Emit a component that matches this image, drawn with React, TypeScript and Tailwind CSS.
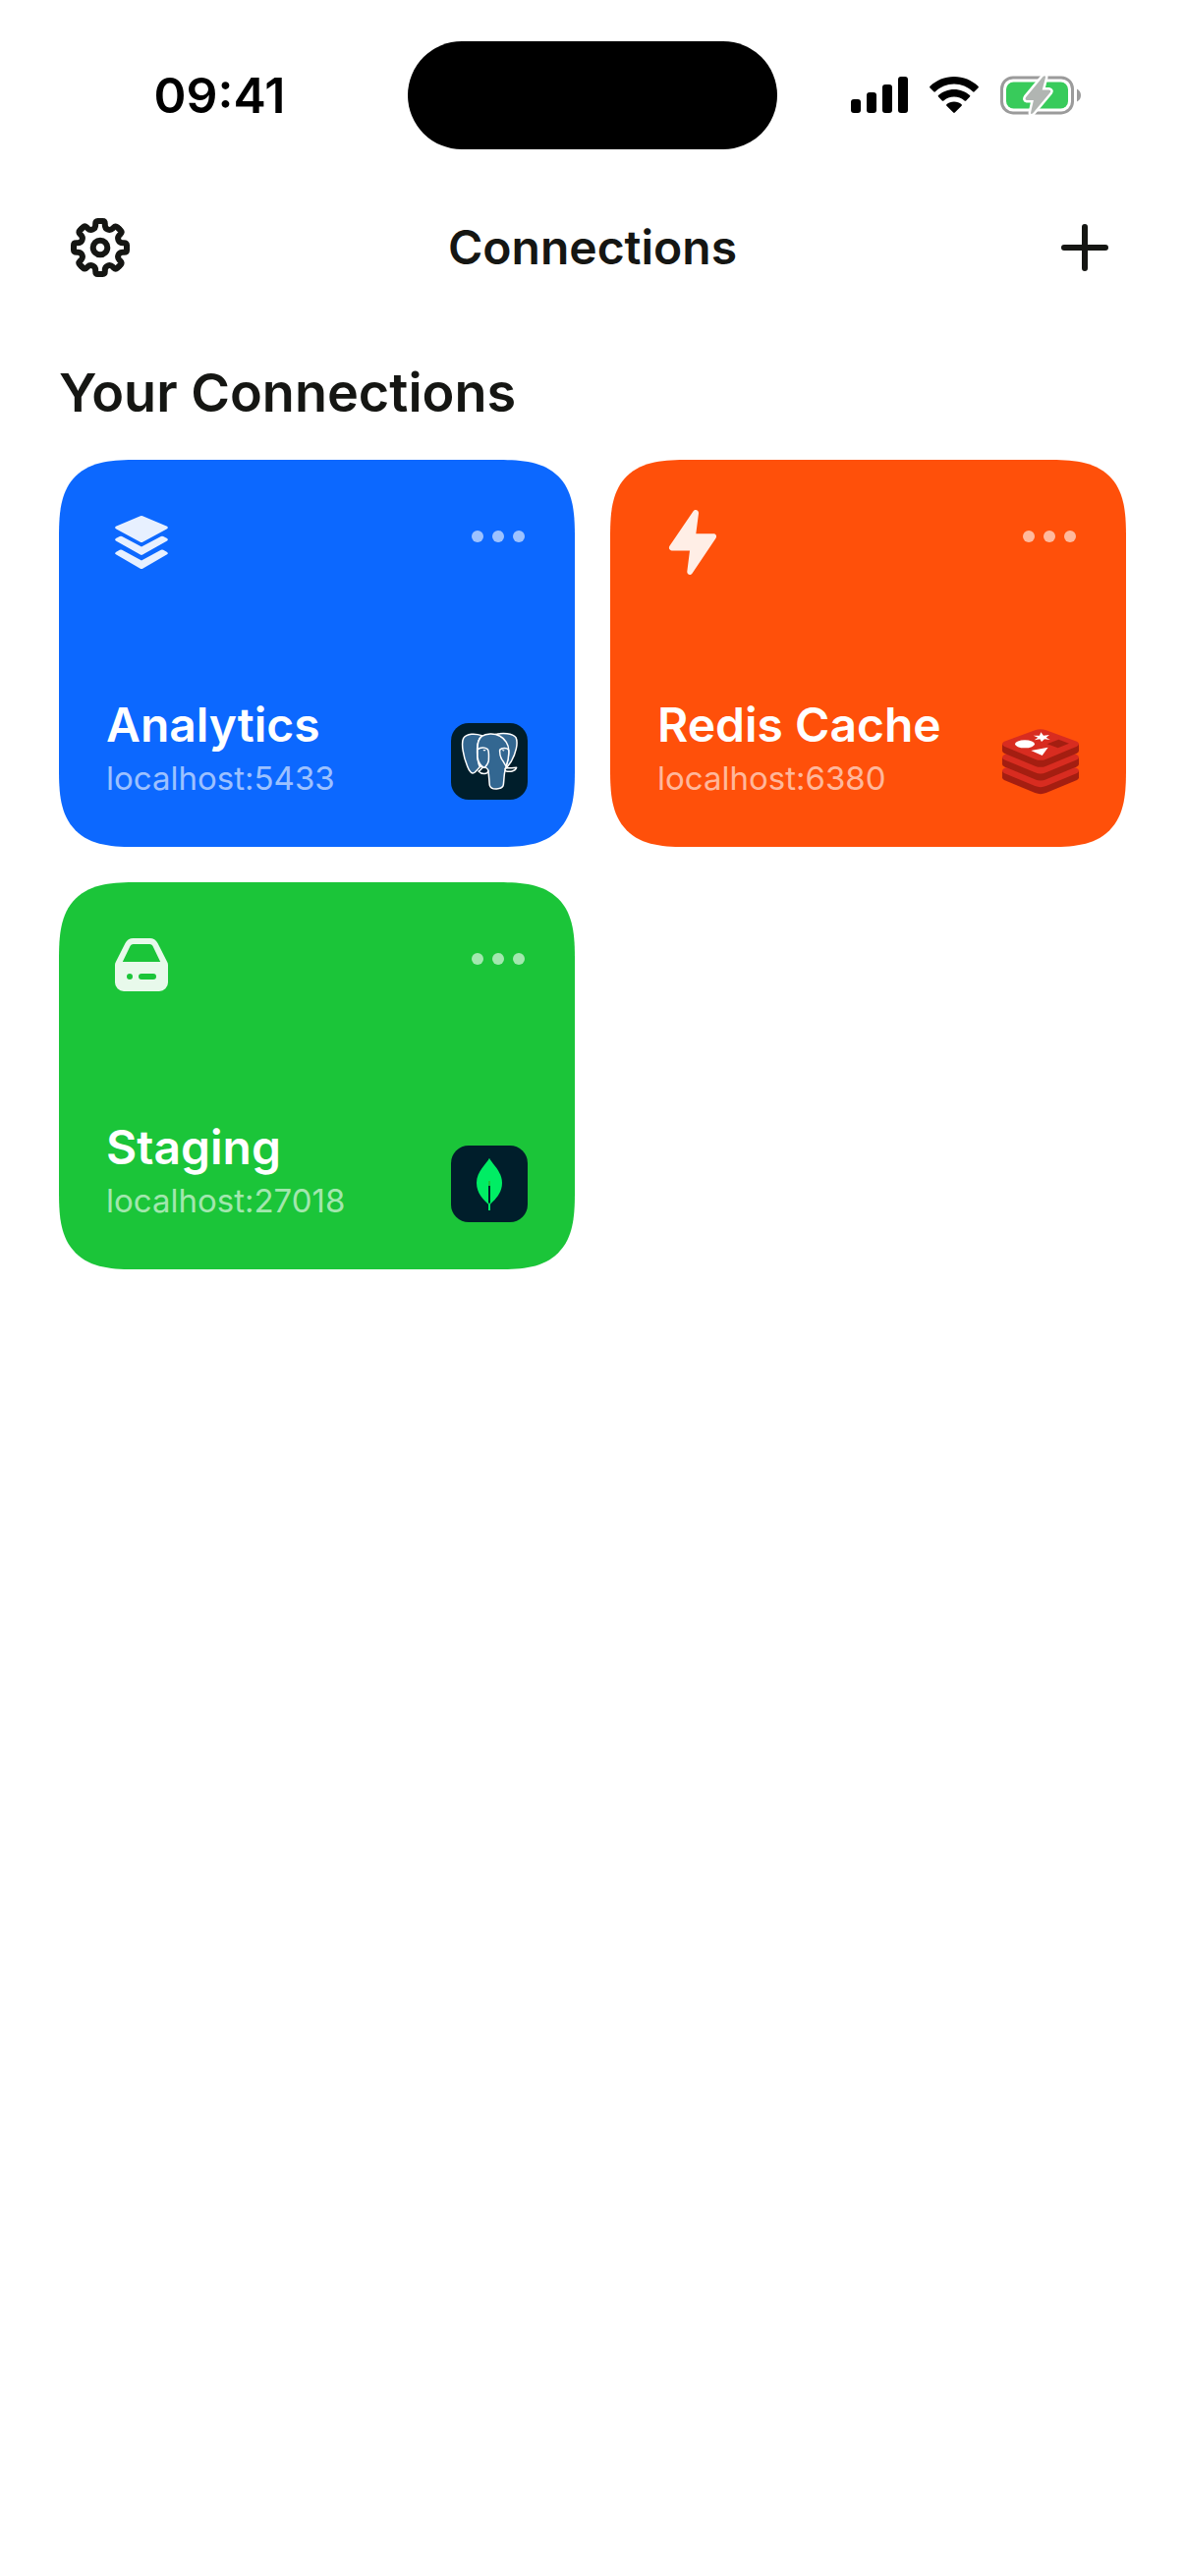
import type { ReactNode } from 'react'

interface Connection {
  name: string
  host: string
  color: string
  icon: ReactNode
  logo: ReactNode
}

function SignalIcon() {
  return (
    <svg className="h-[38px] w-[58px]" viewBox="0 0 58 38" fill="currentColor" aria-hidden="true">
      <rect x="0" y="23" width="10" height="14" rx="3" />
      <rect x="16" y="16" width="10" height="21" rx="3" />
      <rect x="32" y="8" width="10" height="29" rx="3" />
      <rect x="48" y="0" width="10" height="37" rx="3" />
    </svg>
  )
}

function WifiIcon() {
  return (
    <svg className="h-[38px] w-[50px]" viewBox="0 0 50 38" fill="currentColor" aria-hidden="true">
      <path d="M25 0C34.500 0 43 3.600 49.500 9.800Q50.300 10.600 49.500 11.400L45.700 15.300Q44.900 16.100 44.100 15.300C39 10.400 32.300 7.500 25 7.500S11 10.400 5.900 15.300Q5.100 16.100 4.300 15.300L.5 11.400Q-.3 10.600 .5 9.800C7 3.600 15.500 0 25 0Z" />
      <path d="M25 12.900C31.200 12.900 36.800 15.200 41 19Q41.800 19.800 41 20.600L37.200 24.400Q36.400 25.200 35.600 24.400C32.800 21.900 29.100 20.400 25 20.400S17.200 21.900 14.400 24.400Q13.600 25.200 12.800 24.400L9 20.600Q8.200 19.800 9 19C13.200 15.200 18.800 12.900 25 12.900Z" />
      <path d="M25 25.400C27.900 25.400 30.600 26.400 32.600 28.200Q33.400 29 32.600 29.800L25.800 36.600Q25 37.400 24.200 36.600L17.400 29.800Q16.600 29 17.400 28.200C19.400 26.400 22.100 25.400 25 25.400Z" />
    </svg>
  )
}

function BatteryIcon() {
  return (
    <svg className="h-[40px] w-[82px]" viewBox="0 0 82 40" aria-hidden="true">
      <rect x="1.500" y="1.900" width="72" height="36" rx="11.500" fill="none" stroke="#9b9b9b" strokeWidth="3" />
      <path d="M78 13.500Q82 15.500 82 20T78 26.500Z" fill="#9b9b9b" />
      <rect x="6" y="6.500" width="63" height="27" rx="7.500" fill="#38cb5b" />
      <path
        d="M43.700 .8Q46.500-.8 45.900 2.200L42.700 14.500H49.500Q52.500 15 50.500 17.500L33.200 38.200Q30.500 40 31.200 37L33.900 25H27Q24.500 24.500 26.300 21.700Z"
        fill="#b1b5b2"
        stroke="#fff"
        strokeWidth="5"
        strokeLinejoin="round"
        paintOrder="stroke"
      />
    </svg>
  )
}

function GearIcon() {
  return (
    <svg className="size-[66px]" viewBox="-33 -33 66 66" fill="none" stroke="currentColor" strokeWidth="6" strokeLinecap="round" aria-hidden="true">
      <circle r="7.300" />
      {[0, 45, 90, 135, 180, 225, 270, 315].map((angle) => (
        <path
          key={angle}
          transform={`rotate(${angle})`}
          d="M0-27H2.500Q4.800-27 4.800-24.200V-23C4.800-18.500 9.700-16.500 12.870-19.650L13.700-20.500Q15.700-22.500 17.300-20.900L19.100-19.100"
        />
      ))}
    </svg>
  )
}

function PlusIcon() {
  return (
    <svg className="size-[66px]" viewBox="-33 -33 66 66" fill="none" stroke="currentColor" strokeWidth="6" strokeLinecap="round" aria-hidden="true">
      <path d="M0-21V21M-21 0H21" />
    </svg>
  )
}

function LayersIcon() {
  return (
    <svg className="size-[72px]" viewBox="0 0 24 24" fill="currentColor" aria-hidden="true">
      <path d="M11.600 3.100Q12 2.900 12.400 3.100L20.700 6.600Q21.300 7 20.700 7.400L12.400 11.900Q12 12.100 11.600 11.900L3.300 7.400Q2.700 7 3.300 6.600Z" />
      <path d="M4.600 10Q5 9.800 5.400 10L12 13.500 18.600 10Q19 9.800 19.400 10L20.700 10.700Q21.300 11.100 20.700 11.500L12.400 16.200Q12 16.400 11.600 16.200L3.300 11.500Q2.700 11.100 3.300 10.700Z" />
      <path d="M4.600 14.600Q5 14.400 5.400 14.600L12 18.200 18.600 14.600Q19 14.400 19.400 14.600L20.700 15.300Q21.300 15.700 20.700 16.100L12.400 20.900Q12 21.100 11.600 20.900L3.300 16.100Q2.700 15.700 3.300 15.300Z" />
    </svg>
  )
}

function BoltIcon() {
  return (
    <svg className="size-[72px]" viewBox="0 0 24 24" fill="currentColor" aria-hidden="true">
      <path d="M12.200 1.450C12.800.6 14.100 1.100 14 2.150L13.100 9.100H19.100C19.900 9.100 20.300 10 19.800 10.700L11.800 22.550C11.200 23.400 10 22.900 10.100 21.900L11 14.800H4.900C4.100 14.800 3.700 13.900 4.200 13.200Z" />
    </svg>
  )
}

function DriveIcon() {
  return (
    <svg className="size-[72px]" viewBox="0 0 24 24" fill="currentColor" aria-hidden="true">
      <path
        fillRule="evenodd"
        d="M9.200 3H14.800C16 3 17 3.600 17.500 4.700L20.700 11Q21 11.500 21 12.100V18A3 3 0 0 1 18 21H6A3 3 0 0 1 3 18V12.100Q3 11.500 3.300 11L6.500 4.700C7 3.600 8 3 9.200 3ZM9.200 5Q8.500 5 8.200 5.600L5.600 11H18.400L15.800 5.600Q15.500 5 14.800 5ZM8 15A1 1 0 0 0 8 17A1 1 0 0 0 8 15ZM12 15A1 1 0 0 0 12 17H16A1 1 0 0 0 16 15Z"
      />
    </svg>
  )
}

function PostgresLogo() {
  return (
    <svg className="size-[78px] shrink-0" viewBox="0 0 234 234" role="img" aria-label="PostgreSQL">
      <rect width="234" height="234" rx="54" fill="#001e2b" />
      <g fill="#336791" stroke="#fff" strokeWidth="4.500" strokeLinejoin="round" strokeLinecap="round">
        <path d="M134 35C158 29 188 31 198 44C206 60 198 92 184 117L170 136C164 110 174 90 172 76C166 56 152 42 134 35Z" />
        <path d="M94 38C74 31 48 31 38 46C30 62 38 104 50 132C56 148 64 158 73 150L88 134C78 112 80 98 80 78C80 60 84 48 94 38Z" />
        <path d="M94 40C106 32 132 30 148 39C166 48 176 66 176 82C177 104 172 122 166 142C162 152 162 174 160 188C158 204 122 206 118 190C116 176 117 162 113 144L90 132C80 116 80 98 81 78C81 60 84 48 94 40Z" />
        <path d="M81 81C90 73 104 74 112 80C117 86 115 104 115 114C114 124 108 130 102 137C92 132 82 118 81 104Z" />
        <path d="M176 82C170 74 154 76 149 82C148 96 152 108 160 118L168 132C174 116 178 98 176 82Z" />
        <path d="M84 147C92 144 92 136 99 136C106 134 112 138 114 146C112 157 94 158 84 147Z" fill="#001e2b" />
        <path d="M165 139C172 134 178 140 200 136C196 148 180 150 166 146Z" fill="#001e2b" />
      </g>
      <path d="M97 81H107L102 86ZM155 82H164L160 86Z" fill="#fff" />
    </svg>
  )
}

function RedisLogo() {
  return (
    <svg className="size-[78px] shrink-0" viewBox="0 -18 234 234" role="img" aria-label="Redis">
      {[82, 41, 0].map((y) => (
        <g key={y} transform={`translate(0 ${y})`}>
          <path d="M0 46H234V66Q234 71 228 74L134 113Q117 120 100 113L6 74Q0 71 0 66Z" fill="#a41e11" />
          <path d="M6 38 100 4Q117-3 134 4L228 38Q240 46 228 53L134 92Q117 99 100 92L6 53Q-6 46 6 38Z" fill="#d82c20" />
        </g>
      ))}
      <ellipse cx="69" cy="46" rx="30" ry="12" fill="#fff" />
      <path d="M118 10 126 20 144 18 134 26 146 33 129 31 120 39 115 31 98 34 109 26 95 20 114 20Z" fill="#fff" />
      <path d="M88 66 140 56 122 81Z" fill="#fff" />
      <path d="M137 46 172 32 204 44 170 58Z" fill="#a41e11" />
    </svg>
  )
}

function MongoLogo() {
  return (
    <svg className="size-[78px] shrink-0" viewBox="0 0 234 234" role="img" aria-label="MongoDB">
      <rect width="234" height="234" rx="54" fill="#001e2b" />
      <path d="M117 38C124 54 156 78 156 114C156 146 134 166 120 179V198H114V179C100 166 78 146 78 114C78 78 110 54 117 38Z" fill="#00ed64" />
      <path d="M114 122H120V174L117 178 114 174Z" fill="#001e2b" />
      <path d="M114 108H120V122H114Z" fill="#1fc53c" />
    </svg>
  )
}

const connections: Connection[] = [
  { name: 'Analytics', host: 'localhost:5433', color: 'bg-[#0c68ff]', icon: <LayersIcon />, logo: <PostgresLogo /> },
  { name: 'Redis Cache', host: 'localhost:6380', color: 'bg-[#ff500a]', icon: <BoltIcon />, logo: <RedisLogo /> },
  { name: 'Staging', host: 'localhost:27018', color: 'bg-[#1bc539]', icon: <DriveIcon />, logo: <MongoLogo /> },
]

function StatusBar() {
  return (
    <div className="flex items-center pt-[42px] text-black">
      <div className="flex flex-1 justify-center pl-8 text-[50px] leading-[60px] font-semibold">09:41</div>
      <div className="h-[110px] w-[376px] rounded-full bg-black" />
      <div className="flex flex-1 items-center justify-center gap-[22px] pr-8">
        <SignalIcon />
        <WifiIcon />
        <BatteryIcon />
      </div>
    </div>
  )
}

function ConnectionCard({ connection }: { connection: Connection }) {
  return (
    <article
      className={`flex min-h-[394px] flex-col justify-between rounded-[80px] p-12 text-white [corner-shape:superellipse(1.55)] ${connection.color}`}
    >
      <div className="flex items-start justify-between">
        <span className="text-white/90">{connection.icon}</span>
        <button type="button" aria-label={`${connection.name} options`} className="flex h-[60px] w-[60px] items-center justify-center gap-[9px]">
          <span className="size-3 rounded-full bg-white/60" />
          <span className="size-3 rounded-full bg-white/60" />
          <span className="size-3 rounded-full bg-white/60" />
        </button>
      </div>
      <div className="flex items-end justify-between">
        <div className="flex min-w-0 flex-col gap-1">
          <h3 className="text-[48px] leading-[56px] font-semibold">{connection.name}</h3>
          <p className="text-[33px] leading-[44px] text-white/60">{connection.host}</p>
        </div>
        {connection.logo}
      </div>
    </article>
  )
}

export default function App() {
  return (
    <div className="min-h-screen bg-white font-['Inter',sans-serif] text-[#151613]">
      <StatusBar />
      <header className="mt-[34px] flex h-[132px] items-center justify-between px-[60px]">
        <button type="button" aria-label="Settings" className="flex size-[84px] items-center justify-center">
          <GearIcon />
        </button>
        <h1 className="text-[48px] leading-[56px] font-semibold">Connections</h1>
        <button type="button" aria-label="Add connection" className="flex size-[84px] items-center justify-center">
          <PlusIcon />
        </button>
      </header>
      <main className="px-[60px] pt-[52px]">
        <h2 className="text-[54px] leading-[60px] font-semibold">Your Connections</h2>
        <div className="mt-[38px] grid grid-cols-2 gap-9">
          {connections.map((connection) => (
            <ConnectionCard key={connection.name} connection={connection} />
          ))}
        </div>
      </main>
    </div>
  )
}
